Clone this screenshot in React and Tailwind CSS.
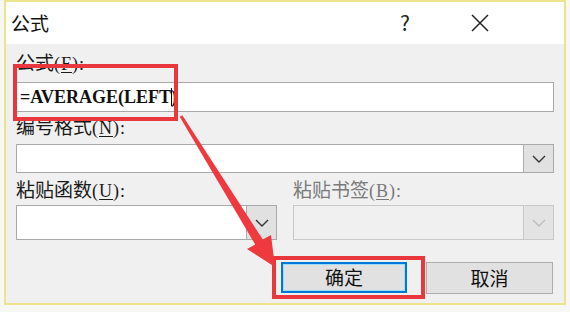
import React from "react";

const serif = { fontFamily: '"Liberation Serif", "DejaVu Serif", "Noto Sans CJK SC", serif' };
const ui = { fontFamily: '"Noto Sans CJK SC", "Noto Sans", sans-serif' };

const Chevron = ({ color = "#333" }) => (
  <svg width="14" height="8" viewBox="0 0 14 8">
    <path d="M1 1 L7 7 L13 1" fill="none" stroke={color} strokeWidth="1.4" />
  </svg>
);

const Label = ({ before, hot, disabled }) => (
  <div
    className={`h-[24px] text-[19px] leading-[24px] ${disabled ? "text-[#7a7a7a]" : "text-[#1a1a1a]"}`}
  >
    <span style={ui}>{before}</span>
    <span className="text-[18px] tracking-[1px]" style={serif}>
      (<span className="underline underline-offset-2">{hot}</span>):
    </span>
  </div>
);

const Select = ({ height, disabled }) => (
  <div
    className={`flex border ${disabled ? "border-[#c8c8c8] bg-[#f0f0f0]" : "border-[#a9a9a9] bg-white"}`}
    style={{ height }}
  >
    <div className="flex-1" />
    <div
      className={`w-[30px] flex items-center justify-center border-l ${
        disabled ? "border-[#c8c8c8] bg-[#e3e3e3]" : "border-[#adadad] bg-[#e1e1e1]"
      }`}
    >
      <Chevron color={disabled ? "#bdbdbd" : "#333"} />
    </div>
  </div>
);

export default function App() {
  return (
    <div className="relative w-[570px] h-[312px] bg-[#f7f7f4] overflow-hidden">
      <div className="ml-[4px] w-[562px] h-[305px] border-2 border-[#ece48c] flex flex-col">
        {/* title bar */}
        <div className="h-[42px] bg-white flex items-center pl-[5px]">
          <div className="text-[19px] text-[#111]" style={ui}>公式</div>
          <div className="flex-1" />
          <div className="text-[21px] text-[#222] mr-[60px]" style={ui}>?</div>
          <svg width="20" height="20" viewBox="0 0 20 20" className="mr-[74px]">
            <path d="M2 2 L18 18 M18 2 L2 18" stroke="#222" strokeWidth="1.5" />
          </svg>
        </div>
        {/* body */}
        <div className="flex-1 bg-[#f0f0f0] px-[10px] pt-[6px] flex flex-col">
          <Label before="公式" hot="F" />
          <div className="mt-[8px] h-[30px] bg-white border border-[#a9a9a9] flex items-center px-[3px]">
            <span className="text-[18px] text-[#111] font-bold" style={serif}>
              =AVERAGE(LEFT
            </span>
            <span className="w-[1px] h-[18px] bg-black" />
            <span className="text-[18px] text-[#111] font-bold ml-[-1px]" style={serif}>)</span>
          </div>
          <div className="mt-[2px]">
            <Label before="编号格式" hot="N" />
          </div>
          <div className="mt-[6px]">
            <Select height={29} />
          </div>
          <div className="mt-[4px] grid grid-cols-2 gap-x-[16px]">
            <Label before="粘贴函数" hot="U" />
            <Label before="粘贴书签" hot="B" disabled />
          </div>
          <div className="mt-[4px] grid grid-cols-2 gap-x-[16px]">
            <Select height={35} />
            <Select height={35} disabled />
          </div>
          <div className="mt-[22px] flex justify-end gap-[19px] pr-[1px]">
            <button
              className="w-[126px] h-[31px] bg-[#e1e1e1] border-2 border-[#0078d7] text-[19px] text-[#111] flex items-center justify-center"
              style={ui}
            >
              <span className="w-full h-full border border-[#9fdcf5] flex items-center justify-center">确定</span>
            </button>
            <button
              className="w-[127px] h-[32px] bg-[#e1e1e1] border border-[#adadad] text-[19px] text-[#111] flex items-center justify-center"
              style={ui}
            >
              取消
            </button>
          </div>
        </div>
      </div>

      {/* annotations */}
      <div className="absolute left-[13px] top-[64px] w-[165px] h-[57px] border-4 border-[#e8383d]" />
      <div className="absolute left-[272px] top-[256px] w-[153px] h-[43px] border-4 border-[#e8383d]" />
      <svg className="absolute left-0 top-0" width="570" height="312" viewBox="0 0 570 312">
        <polygon
          points="179.7,116.8 182.3,115.2 262.8,239.6 271,235 275,267 247,249 255.2,244.4"
          fill="#ee3a3f"
        />
      </svg>
    </div>
  );
}
